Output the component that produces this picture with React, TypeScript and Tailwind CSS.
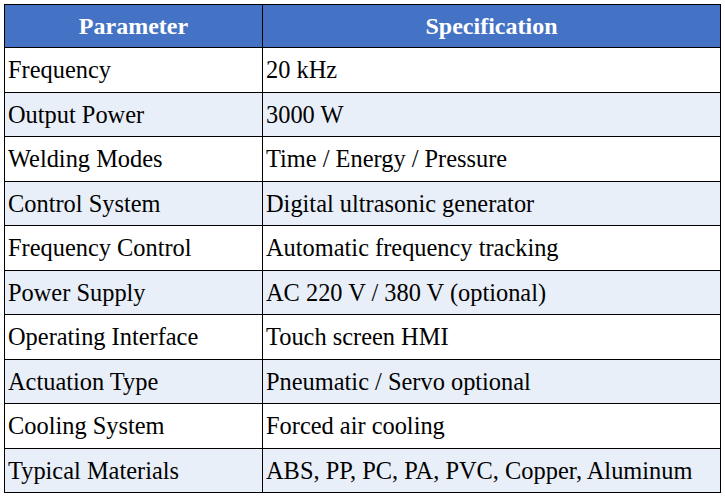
import React from "react";

const rows: [string, string][] = [
  ["Frequency", "20 kHz"],
  ["Output Power", "3000 W"],
  ["Welding Modes", "Time / Energy / Pressure"],
  ["Control System", "Digital ultrasonic generator"],
  ["Frequency Control", "Automatic frequency tracking"],
  ["Power Supply", "AC 220 V / 380 V (optional)"],
  ["Operating Interface", "Touch screen HMI"],
  ["Actuation Type", "Pneumatic / Servo optional"],
  ["Cooling System", "Forced air cooling"],
  ["Typical Materials", "ABS, PP, PC, PA, PVC, Copper, Aluminum"],
];

export default function App() {
  return (
    <div className="w-[725px] h-[498px] bg-white pt-[4px] pl-[4px] font-['Liberation_Serif','Times_New_Roman',serif]">
      <div className="w-[717px] border border-black flex flex-col">
        <div className="flex h-[42px] bg-[#4472C4] text-white font-bold text-[24px] leading-none">
          <div className="w-[257px] flex items-center justify-center">Parameter</div>
          <div className="w-px bg-black" />
          <div className="flex-1 flex items-center justify-center">Specification</div>
        </div>
        {rows.map(([a, b], i) => (
          <div
            key={a}
            className={`flex border-t border-black text-black text-[24.4px] leading-none ${i % 2 === 0 ? "h-[45px] bg-white" : "h-[44px] bg-[#E9EFF8]"}`}
          >
            <div className="w-[257px] flex items-center pl-[3px] pt-[1px] whitespace-nowrap">{a}</div>
            <div className="w-px bg-black" />
            <div className="flex-1 flex items-center pl-[3px] pt-[1px] whitespace-nowrap">{b}</div>
          </div>
        ))}
      </div>
    </div>
  );
}
